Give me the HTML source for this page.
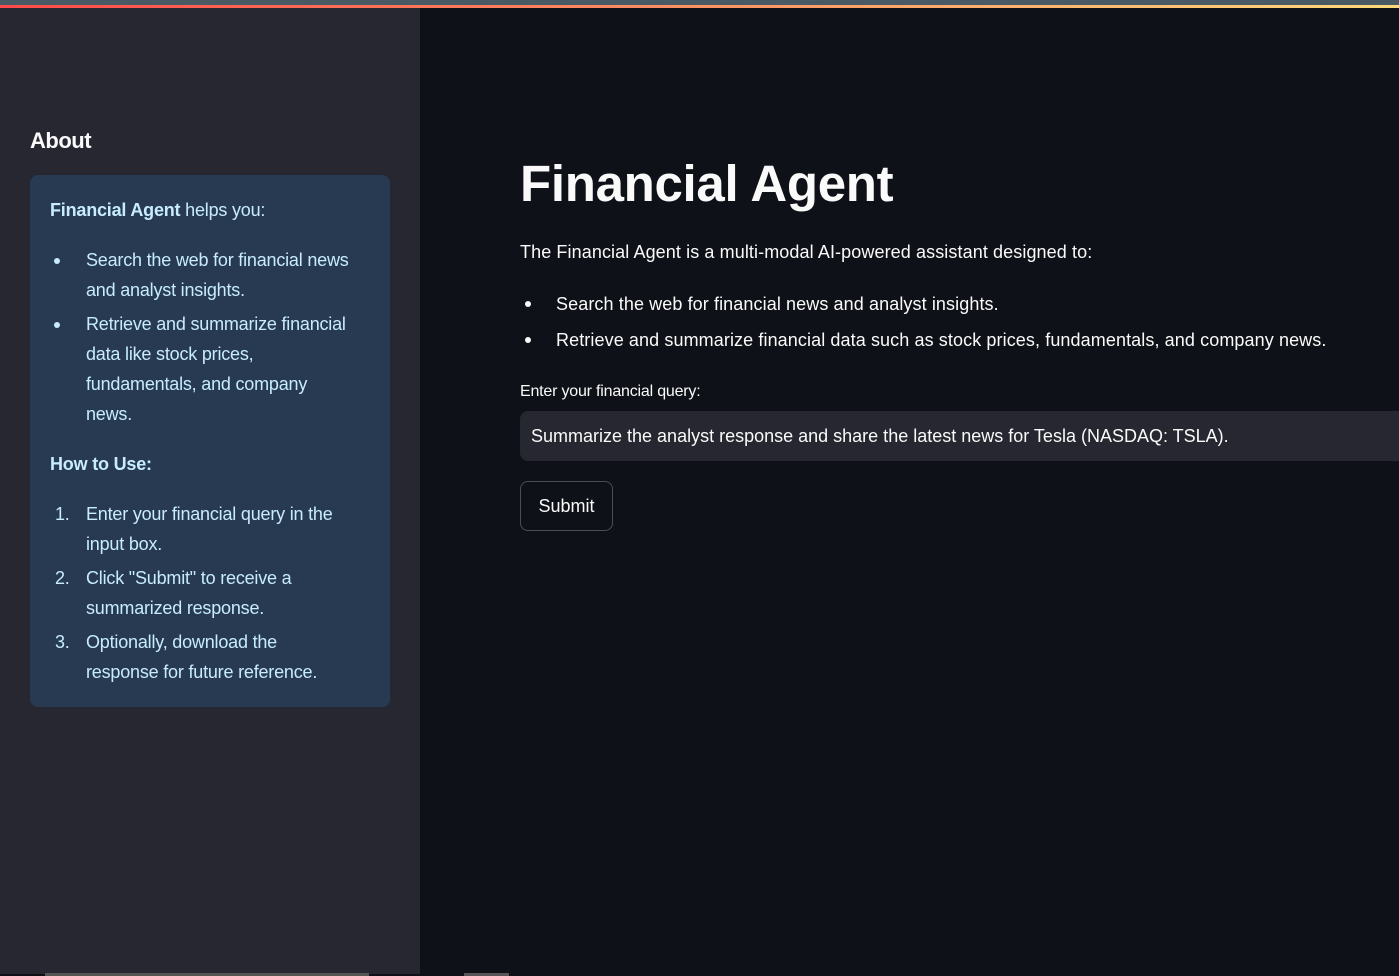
<!DOCTYPE html>
<html><head><style>
*{margin:0;padding:0;box-sizing:border-box}
body{width:1399px;height:976px;overflow:hidden;background:#0e1117;font-family:"Liberation Sans",sans-serif;color:#fafafa;position:relative}
.top{position:absolute;left:0;top:0;width:1399px;height:5px;background:#4a5a64}
.grad{position:absolute;left:0;top:5px;width:1399px;height:3px;background:linear-gradient(90deg,#ff4b4b,#fdd97b)}
.side{position:absolute;left:0;top:8px;width:420px;height:966px;background:#262730}
.sh{position:absolute;left:30px;top:128px;font-size:22px;font-weight:bold;letter-spacing:-0.5px}
.box{position:absolute;left:30px;top:175px;width:360px;height:532px;background:#283a51;border-radius:8px}
.s{position:absolute;color:#c7ebff;font-size:18px;white-space:nowrap;letter-spacing:-0.2px;line-height:22px}
.sd{position:absolute;left:54px;width:6px;height:6px;border-radius:3px;background:#c7ebff}
h1{position:absolute;left:520px;top:154px;font-size:51px;font-weight:bold;letter-spacing:-0.3px;white-space:nowrap}
.p{position:absolute;left:520px;font-size:18px;white-space:nowrap;letter-spacing:0.1px;line-height:22px}
.dot{position:absolute;left:525px;width:6px;height:6px;border-radius:3px;background:#fafafa}
.inp{position:absolute;left:520px;top:411px;width:879px;height:50px;background:#262730;border-radius:8px 0 0 8px;padding:14px 11px;font-size:18px;white-space:nowrap;line-height:22px}
.btn{position:absolute;left:520px;top:481px;width:93px;height:50px;border:1px solid #4a4d57;border-radius:8px;font-size:18px;text-align:center;line-height:48px}
.sb{position:absolute;top:973px;height:3px;background:#555}
</style></head><body>
<div class="top"></div><div class="grad"></div>
<div class="side"></div>
<div class="sh">About</div>
<div class="box"></div>
<div class="s" style="left:50px;top:199px"><b>Financial Agent</b> helps you:</div>
<div class="sd" style="top:258px"></div>
<div class="s" style="left:86px;top:249px">Search the web for financial news</div>
<div class="s" style="left:86px;top:279px">and analyst insights.</div>
<div class="sd" style="top:322px"></div>
<div class="s" style="left:86px;top:313px">Retrieve and summarize financial</div>
<div class="s" style="left:86px;top:343px">data like stock prices,</div>
<div class="s" style="left:86px;top:373px">fundamentals, and company</div>
<div class="s" style="left:86px;top:403px">news.</div>
<div class="s" style="left:50px;top:453px"><b>How to Use:</b></div>
<div class="s" style="left:55px;top:503px">1.</div>
<div class="s" style="left:86px;top:503px">Enter your financial query in the</div>
<div class="s" style="left:86px;top:533px">input box.</div>
<div class="s" style="left:55px;top:567px">2.</div>
<div class="s" style="left:86px;top:567px">Click "Submit" to receive a</div>
<div class="s" style="left:86px;top:597px">summarized response.</div>
<div class="s" style="left:55px;top:631px">3.</div>
<div class="s" style="left:86px;top:631px">Optionally, download the</div>
<div class="s" style="left:86px;top:661px">response for future reference.</div>
<h1>Financial Agent</h1>
<div class="p" style="top:241px">The Financial Agent is a multi-modal AI-powered assistant designed to:</div>
<div class="dot" style="top:301px"></div>
<div class="p" style="top:293px;left:556px">Search the web for financial news and analyst insights.</div>
<div class="dot" style="top:337px"></div>
<div class="p" style="top:329px;left:556px">Retrieve and summarize financial data such as stock prices, fundamentals, and company news.</div>
<div class="p" style="top:381px;font-size:16px;letter-spacing:-0.2px">Enter your financial query:</div>
<div class="inp">Summarize the analyst response and share the latest news for Tesla (NASDAQ: TSLA).</div>
<div class="btn">Submit</div>
<div class="sb" style="left:45px;width:324px"></div>
<div class="sb" style="left:464px;width:45px"></div>
</body></html>
